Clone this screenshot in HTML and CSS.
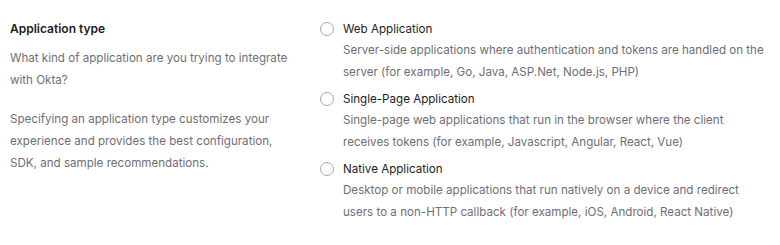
FILE: index.html
```html
<!DOCTYPE html>
<html lang="en">
<head>
    <meta charset="UTF-8">
    <title>Application type</title>
    <link rel="stylesheet" href="styles.css">
</head>
<body>

<div class="section">
    <div class="info">
        <h3 class="info-title">Application type</h3>
        <p class="info-text">What kind of application are you trying to integrate with Okta?</p>
        <p class="info-text">Specifying an application type customizes your experience and provides the best configuration, SDK, and sample recommendations.</p>
    </div>

    <div class="options">
        <label class="option">
            <input type="radio" name="appType" value="web">
            <span class="option-body">
                <span class="option-title">Web Application</span>
                <span class="option-desc">Server-side applications where authentication and tokens are handled on the server (for example, Go, Java, ASP.Net, Node.js, PHP)</span>
            </span>
        </label>
        <label class="option">
            <input type="radio" name="appType" value="spa">
            <span class="option-body">
                <span class="option-title">Single-Page Application</span>
                <span class="option-desc">Single-page web applications that run in the browser where the client receives tokens (for example, Javascript, Angular, React, Vue)</span>
            </span>
        </label>
        <label class="option">
            <input type="radio" name="appType" value="native">
            <span class="option-body">
                <span class="option-title">Native Application</span>
                <span class="option-desc">Desktop or mobile applications that run natively on a device and redirect users to a non-HTTP callback (for example, iOS, Android, React Native)</span>
            </span>
        </label>
    </div>
</div>

</body>
</html>
```

FILE: styles.css
```css
body {
    margin: 0;
    font-family: Inter, "Noto Sans", sans-serif;
    font-size: 11.6px;
    background: #fff;
    color: #1d1d21;
}

.section {
    display: flex;
    padding: 19px 10px 0 10px;
}

.info {
    width: 292px;
    margin-right: 18px;
}

.info-title {
    margin: 0;
    font-size: 12px;
    font-weight: 600;
    line-height: 20px;
}

.info-text {
    margin: 8px 0 17px 0;
    color: #6e6e78;
    line-height: 22px;
}

.info-text + .info-text {
    margin-top: 0;
}

.options {
    width: 447px;
}

.option {
    display: flex;
    margin-bottom: 6px;
    cursor: pointer;
}

.option input[type=radio] {
    appearance: none;
    width: 14px;
    height: 14px;
    margin: 3px 9px 0 0;
    border: 1px solid #a7a7ad;
    border-radius: 50%;
    box-sizing: border-box;
    flex-shrink: 0;
}

.option-body {
    display: flex;
    flex-direction: column;
    width: 424px;
}

.option-title {
    line-height: 20px;
}

.option-desc {
    color: #6e6e78;
    line-height: 22px;
}
```
